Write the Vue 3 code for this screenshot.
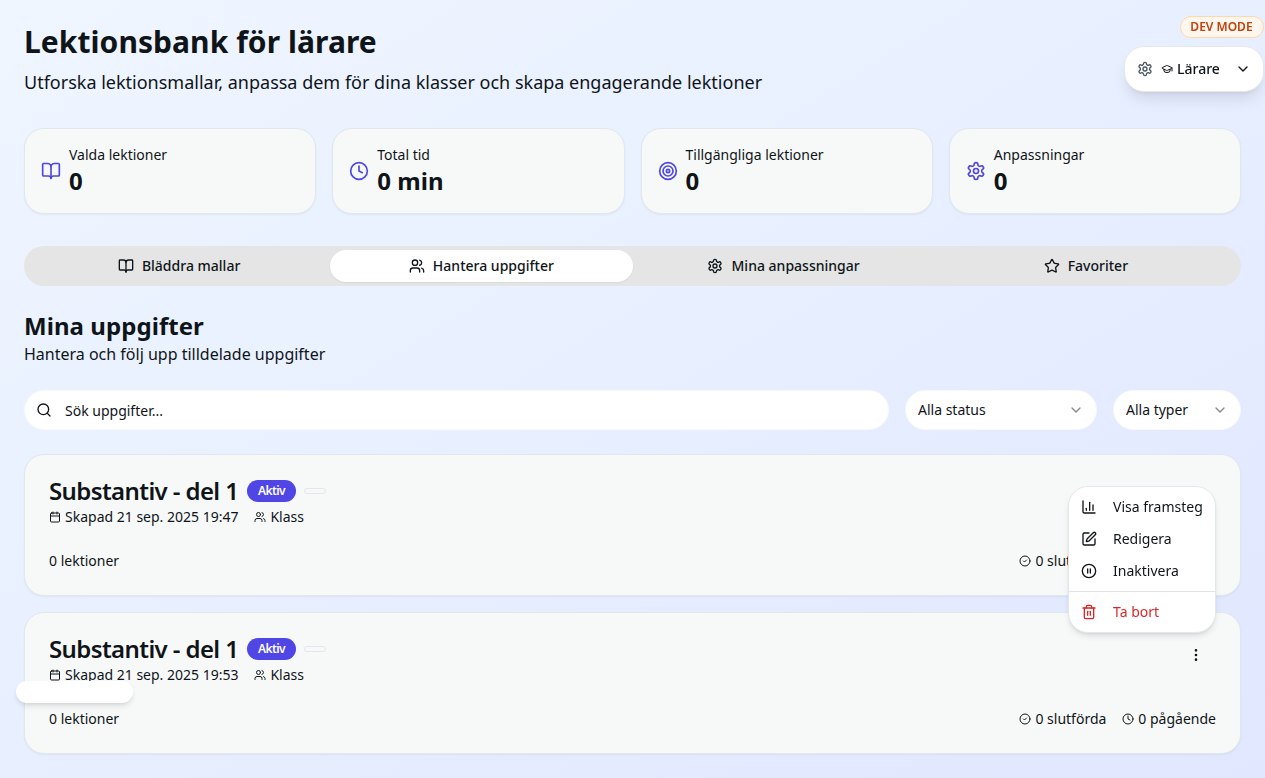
<script setup>
import { h } from 'vue'

const shapes = {
  bookOpen: '<path d="M12 7v14"/><path d="M3 18a1 1 0 0 1-1-1V4a1 1 0 0 1 1-1h5a4 4 0 0 1 4 4 4 4 0 0 1 4-4h5a1 1 0 0 1 1 1v13a1 1 0 0 1-1 1h-6a3 3 0 0 0-3 3 3 3 0 0 0-3-3z"/>',
  clock: '<circle cx="12" cy="12" r="10"/><path d="M12 6v6l4 2"/>',
  target: '<circle cx="12" cy="12" r="10"/><circle cx="12" cy="12" r="6"/><circle cx="12" cy="12" r="2"/>',
  settings: '<path d="M12.22 2h-.44a2 2 0 0 0-2 2v.18a2 2 0 0 1-1 1.73l-.43.25a2 2 0 0 1-2 0l-.15-.08a2 2 0 0 0-2.73.73l-.22.38a2 2 0 0 0 .73 2.73l.15.1a2 2 0 0 1 1 1.72v.51a2 2 0 0 1-1 1.74l-.15.09a2 2 0 0 0-.73 2.73l.22.38a2 2 0 0 0 2.73.73l.15-.08a2 2 0 0 1 2 0l.43.25a2 2 0 0 1 1 1.73V20a2 2 0 0 0 2 2h.44a2 2 0 0 0 2-2v-.18a2 2 0 0 1 1-1.73l.43-.25a2 2 0 0 1 2 0l.15.08a2 2 0 0 0 2.73-.73l.22-.39a2 2 0 0 0-.73-2.73l-.15-.08a2 2 0 0 1-1-1.74v-.5a2 2 0 0 1 1-1.74l.15-.09a2 2 0 0 0 .73-2.73l-.22-.38a2 2 0 0 0-2.73-.73l-.15.08a2 2 0 0 1-2 0l-.43-.25a2 2 0 0 1-1-1.73V4a2 2 0 0 0-2-2z"/><circle cx="12" cy="12" r="3"/>',
  users: '<path d="M16 21v-2a4 4 0 0 0-4-4H6a4 4 0 0 0-4 4v2"/><circle cx="9" cy="7" r="4"/><path d="M22 21v-2a4 4 0 0 0-3-3.87"/><path d="M16 3.13a4 4 0 0 1 0 7.75"/>',
  star: '<path d="M11.525 2.295a.53.53 0 0 1 .95 0l2.31 4.679a2.123 2.123 0 0 0 1.595 1.16l5.166.756a.53.53 0 0 1 .294.904l-3.736 3.638a2.123 2.123 0 0 0-.611 1.878l.882 5.14a.53.53 0 0 1-.771.56l-4.618-2.428a2.122 2.122 0 0 0-1.973 0L6.396 21.01a.53.53 0 0 1-.77-.56l.881-5.139a2.122 2.122 0 0 0-.611-1.879L2.16 9.795a.53.53 0 0 1 .294-.906l5.165-.755a2.122 2.122 0 0 0 1.597-1.16z"/>',
  search: '<circle cx="11" cy="11" r="8"/><path d="m21 21-4.3-4.3"/>',
  chevron: '<path d="m6 9 6 6 6-6"/>',
  calendar: '<path d="M8 2v4"/><path d="M16 2v4"/><rect width="18" height="18" x="3" y="4" rx="2"/><path d="M3 10h18"/>',
  check: '<circle cx="12" cy="12" r="10"/><path d="m9 12 2 2 4-4"/>',
  cap: '<path d="M21.42 10.922a1 1 0 0 0-.019-1.838L12.83 5.18a2 2 0 0 0-1.66 0L2.6 9.08a1 1 0 0 0 0 1.832l8.57 3.908a2 2 0 0 0 1.66 0z"/><path d="M22 10v6"/><path d="M6 12.5V16a6 3 0 0 0 12 0v-3.5"/>',
  chart: '<path d="M3 3v16a2 2 0 0 0 2 2h16"/><path d="M18 17V9"/><path d="M13 17V5"/><path d="M8 17v-3"/>',
  edit: '<path d="M12 3H5a2 2 0 0 0-2 2v14a2 2 0 0 0 2 2h14a2 2 0 0 0 2-2v-7"/><path d="M18.375 2.625a1 1 0 0 1 3 3l-9.013 9.014a2 2 0 0 1-.853.505l-2.873.84a.5.5 0 0 1-.62-.62l.84-2.873a2 2 0 0 1 .506-.852z"/>',
  pause: '<circle cx="12" cy="12" r="10"/><path d="M10 15V9"/><path d="M14 15V9"/>',
  trash: '<path d="M3 6h18"/><path d="M19 6v14a2 2 0 0 1-2 2H7a2 2 0 0 1-2-2V6"/><path d="M8 6V4a2 2 0 0 1 2-2h4a2 2 0 0 1 2 2v2"/><path d="M10 11v6"/><path d="M14 11v6"/>',
  dots: '<circle cx="12" cy="12" r="1"/><circle cx="12" cy="5" r="1"/><circle cx="12" cy="19" r="1"/>',
}

const Icon = ({ name, size = 16 }) =>
  h('svg', {
    width: size,
    height: size,
    viewBox: '0 0 24 24',
    fill: 'none',
    stroke: 'currentColor',
    'stroke-width': 2,
    'stroke-linecap': 'round',
    'stroke-linejoin': 'round',
    innerHTML: shapes[name],
  })
Icon.props = ['name', 'size']

const stats = [
  { icon: 'bookOpen', label: 'Valda lektioner', value: '0' },
  { icon: 'clock', label: 'Total tid', value: '0 min' },
  { icon: 'target', label: 'Tillgängliga lektioner', value: '0' },
  { icon: 'settings', label: 'Anpassningar', value: '0' },
]
const tabs = [
  { icon: 'bookOpen', label: 'Bläddra mallar' },
  { icon: 'users', label: 'Hantera uppgifter', active: true },
  { icon: 'settings', label: 'Mina anpassningar' },
  { icon: 'star', label: 'Favoriter' },
]
const tasks = [
  { title: 'Substantiv - del 1', created: 'Skapad 21 sep. 2025 19:47' },
  { title: 'Substantiv - del 1', created: 'Skapad 21 sep. 2025 19:53' },
]
const actions = [
  { icon: 'chart', label: 'Visa framsteg' },
  { icon: 'edit', label: 'Redigera' },
  { icon: 'pause', label: 'Inaktivera' },
]
</script>

<template>
  <div class="page">
    <header>
      <h1>Lektionsbank för lärare</h1>
      <p class="lead">Utforska lektionsmallar, anpassa dem för dina klasser och skapa engagerande lektioner</p>
    </header>

    <section class="stats">
      <div v-for="s in stats" :key="s.label" class="panel stat">
        <Icon :name="s.icon" :size="20" />
        <div>
          <p class="stat-label">{{ s.label }}</p>
          <p class="stat-value">{{ s.value }}</p>
        </div>
      </div>
    </section>

    <nav class="tabs">
      <button v-for="t in tabs" :key="t.label" class="tab" :class="{ active: t.active }">
        <Icon :name="t.icon" />{{ t.label }}
      </button>
    </nav>

    <section class="heading">
      <h2>Mina uppgifter</h2>
      <p>Hantera och följ upp tilldelade uppgifter</p>
    </section>

    <section class="filters">
      <div class="field search"><Icon name="search" /><span>Sök uppgifter...</span></div>
      <div class="field select status"><span>Alla status</span><Icon name="chevron" /></div>
      <div class="field select kind"><span>Alla typer</span><Icon name="chevron" /></div>
    </section>

    <section class="tasks">
      <article v-for="(t, i) in tasks" :key="i" class="panel task">
        <div class="task-head">
          <div>
            <div class="title-row">
              <h3>{{ t.title }}</h3>
              <span class="badge">Aktiv</span>
              <span class="badge-empty"></span>
            </div>
            <div class="meta">
              <span class="bit"><Icon name="calendar" :size="12" />{{ t.created }}</span>
              <span class="bit"><Icon name="users" :size="12" />Klass</span>
            </div>
          </div>
          <button class="more"><Icon name="dots" /></button>
        </div>
        <div class="task-foot">
          <span>0 lektioner</span>
          <div class="meta">
            <span class="bit"><Icon name="check" :size="12" />0 slutförda</span>
            <span class="bit"><Icon name="clock" :size="12" />0 pågående</span>
          </div>
        </div>
      </article>
    </section>

    <div class="menu">
      <div v-for="a in actions" :key="a.label" class="item"><Icon :name="a.icon" />{{ a.label }}</div>
      <div class="rule"></div>
      <div class="item danger"><Icon name="trash" />Ta bort</div>
    </div>

    <div class="dev">
      <span class="dev-badge">DEV MODE</span>
      <div class="role">
        <span class="gear"><Icon name="settings" /></span>
        <span class="role-name"><Icon name="cap" :size="12" />Lärare</span>
        <Icon name="chevron" />
      </div>
    </div>

    <div class="toast"></div>
  </div>
</template>

<style>
body {
  margin: 0;
  overflow: hidden;
}
</style>

<style scoped>
* {
  box-sizing: border-box;
}
h1, h2, h3, p {
  margin: 0;
}
svg {
  display: block;
  flex-shrink: 0;
}
button {
  border: 0;
  background: none;
  padding: 0;
  font: inherit;
  color: inherit;
}
.page {
  position: relative;
  min-height: 778px;
  padding: 24px;
  overflow: hidden;
  background: linear-gradient(to bottom right, #eff6ff, #e0e7ff);
  color: #0f1419;
  font-family: "Noto Sans", sans-serif;
  font-size: 14px;
  line-height: 20px;
}
h1 {
  font-size: 30px;
  line-height: 36px;
  font-weight: 700;
  letter-spacing: 0.06px;
}
.lead {
  margin-top: 8px;
  font-size: 18px;
  line-height: 28px;
}
.panel {
  border: 1px solid #e1e8ed;
  border-radius: 20px;
  background: #f7f9f8;
  box-shadow: 0 1px 2px rgba(0, 0, 0, 0.05);
}
.stats {
  display: grid;
  grid-template-columns: repeat(4, 1fr);
  gap: 16px;
  margin-top: 32px;
}
.stat {
  display: flex;
  align-items: center;
  gap: 8px;
  padding: 16px;
}
.stat svg {
  color: #4f46e5;
}
.stat-value {
  font-size: 24px;
  line-height: 32px;
  font-weight: 700;
  letter-spacing: 0.06px;
}
.tabs {
  display: grid;
  grid-template-columns: repeat(4, 1fr);
  height: 40px;
  margin-top: 32px;
  padding: 4px;
  border-radius: 20px;
  background: #e5e5e5;
}
.tab {
  display: flex;
  align-items: center;
  justify-content: center;
  gap: 8px;
  border-radius: 18px;
  font-weight: 500;
  letter-spacing: 0.01px;
}
.tab.active {
  background: #fff;
  box-shadow: 0 1px 2px rgba(0, 0, 0, 0.05);
}
.heading {
  margin-top: 24px;
}
h2 {
  font-size: 24px;
  line-height: 32px;
  font-weight: 700;
  letter-spacing: 0.06px;
}
.heading p {
  font-size: 16px;
  line-height: 24px;
}
.filters {
  display: flex;
  gap: 16px;
  margin-top: 24px;
}
.field {
  display: flex;
  align-items: center;
  height: 40px;
  padding: 0 12px;
  border: 1px solid #f7f9fa;
  border-radius: 20px;
  background: #fff;
}
.search {
  flex: 1;
  gap: 13px;
  padding-left: 11px;
}
.search span {
  padding-top: 2px;
}
.select {
  justify-content: space-between;
}
.select svg {
  opacity: 0.5;
}
.status {
  width: 192px;
}
.kind {
  width: 128px;
}
.tasks {
  display: flex;
  flex-direction: column;
  gap: 16px;
  margin-top: 24px;
}
.task {
  padding: 24px;
}
.task-head {
  display: flex;
  justify-content: space-between;
  align-items: flex-start;
}
.title-row {
  display: flex;
  align-items: center;
  gap: 8px;
}
h3 {
  margin-right: 0.7px;
  font-size: 24px;
  line-height: 24px;
  font-weight: 600;
  letter-spacing: -0.6px;
}
.badge {
  padding: 2px 10px;
  border: 1px solid transparent;
  border-radius: 999px;
  background: #4f46e5;
  color: #fff;
  font-size: 12px;
  line-height: 16px;
  font-weight: 600;
  letter-spacing: -0.6px;
}
.badge-empty {
  width: 22px;
  height: 6px;
  border: 1px solid #e1e8ed;
  border-radius: 999px;
}
.meta {
  display: flex;
  gap: 16px;
}
.task-head .meta {
  margin-top: 4px;
}
.bit {
  display: flex;
  align-items: center;
  gap: 4px;
}
.more {
  display: flex;
  align-items: center;
  justify-content: center;
  width: 40px;
  height: 36px;
}
.task-foot {
  display: flex;
  justify-content: space-between;
  margin-top: 24px;
}
.menu {
  position: absolute;
  top: 486px;
  right: 49px;
  padding: 4px;
  border: 1px solid #e1e8ed;
  border-radius: 20px;
  background: #fff;
  box-shadow: 0 4px 6px -1px rgba(0, 0, 0, 0.1), 0 2px 4px -2px rgba(0, 0, 0, 0.1);
  will-change: transform;
}
.item {
  display: flex;
  align-items: center;
  gap: 16px;
  height: 32px;
  padding: 0 8px;
}
.danger {
  color: #dc2626;
}
.rule {
  height: 1px;
  margin: 4px -4px;
  background: #e1e3e6;
}
.dev {
  position: absolute;
  top: 16px;
  right: 1px;
  display: flex;
  flex-direction: column;
  align-items: flex-end;
  gap: 8px;
  will-change: transform;
}
.dev-badge {
  padding: 2px 10.4px 2px 9.8px;
  border: 1px solid #fed7aa;
  border-radius: 999px;
  background: #fff7ed;
  color: #c2410c;
  font-size: 12px;
  line-height: 16px;
  font-weight: 600;
}
.role {
  display: flex;
  align-items: center;
  width: 140px;
  height: 46px;
  padding: 0 12px;
  border: 1px solid #e5e7eb;
  border-radius: 20px;
  background: #fff;
  box-shadow: 0 10px 15px -3px rgba(0, 0, 0, 0.1), 0 4px 6px -4px rgba(0, 0, 0, 0.1);
  font-weight: 500;
}
.gear {
  margin-right: 8px;
  color: #4b5563;
}
.role-name {
  display: flex;
  align-items: center;
  gap: 4px;
  flex: 1;
}
.toast {
  position: absolute;
  top: 681px;
  left: 16px;
  width: 117px;
  height: 22px;
  border-radius: 11px;
  background: #fff;
  box-shadow: 0 4px 6px -1px rgba(0, 0, 0, 0.1), 0 2px 4px -2px rgba(0, 0, 0, 0.1);
}
</style>
